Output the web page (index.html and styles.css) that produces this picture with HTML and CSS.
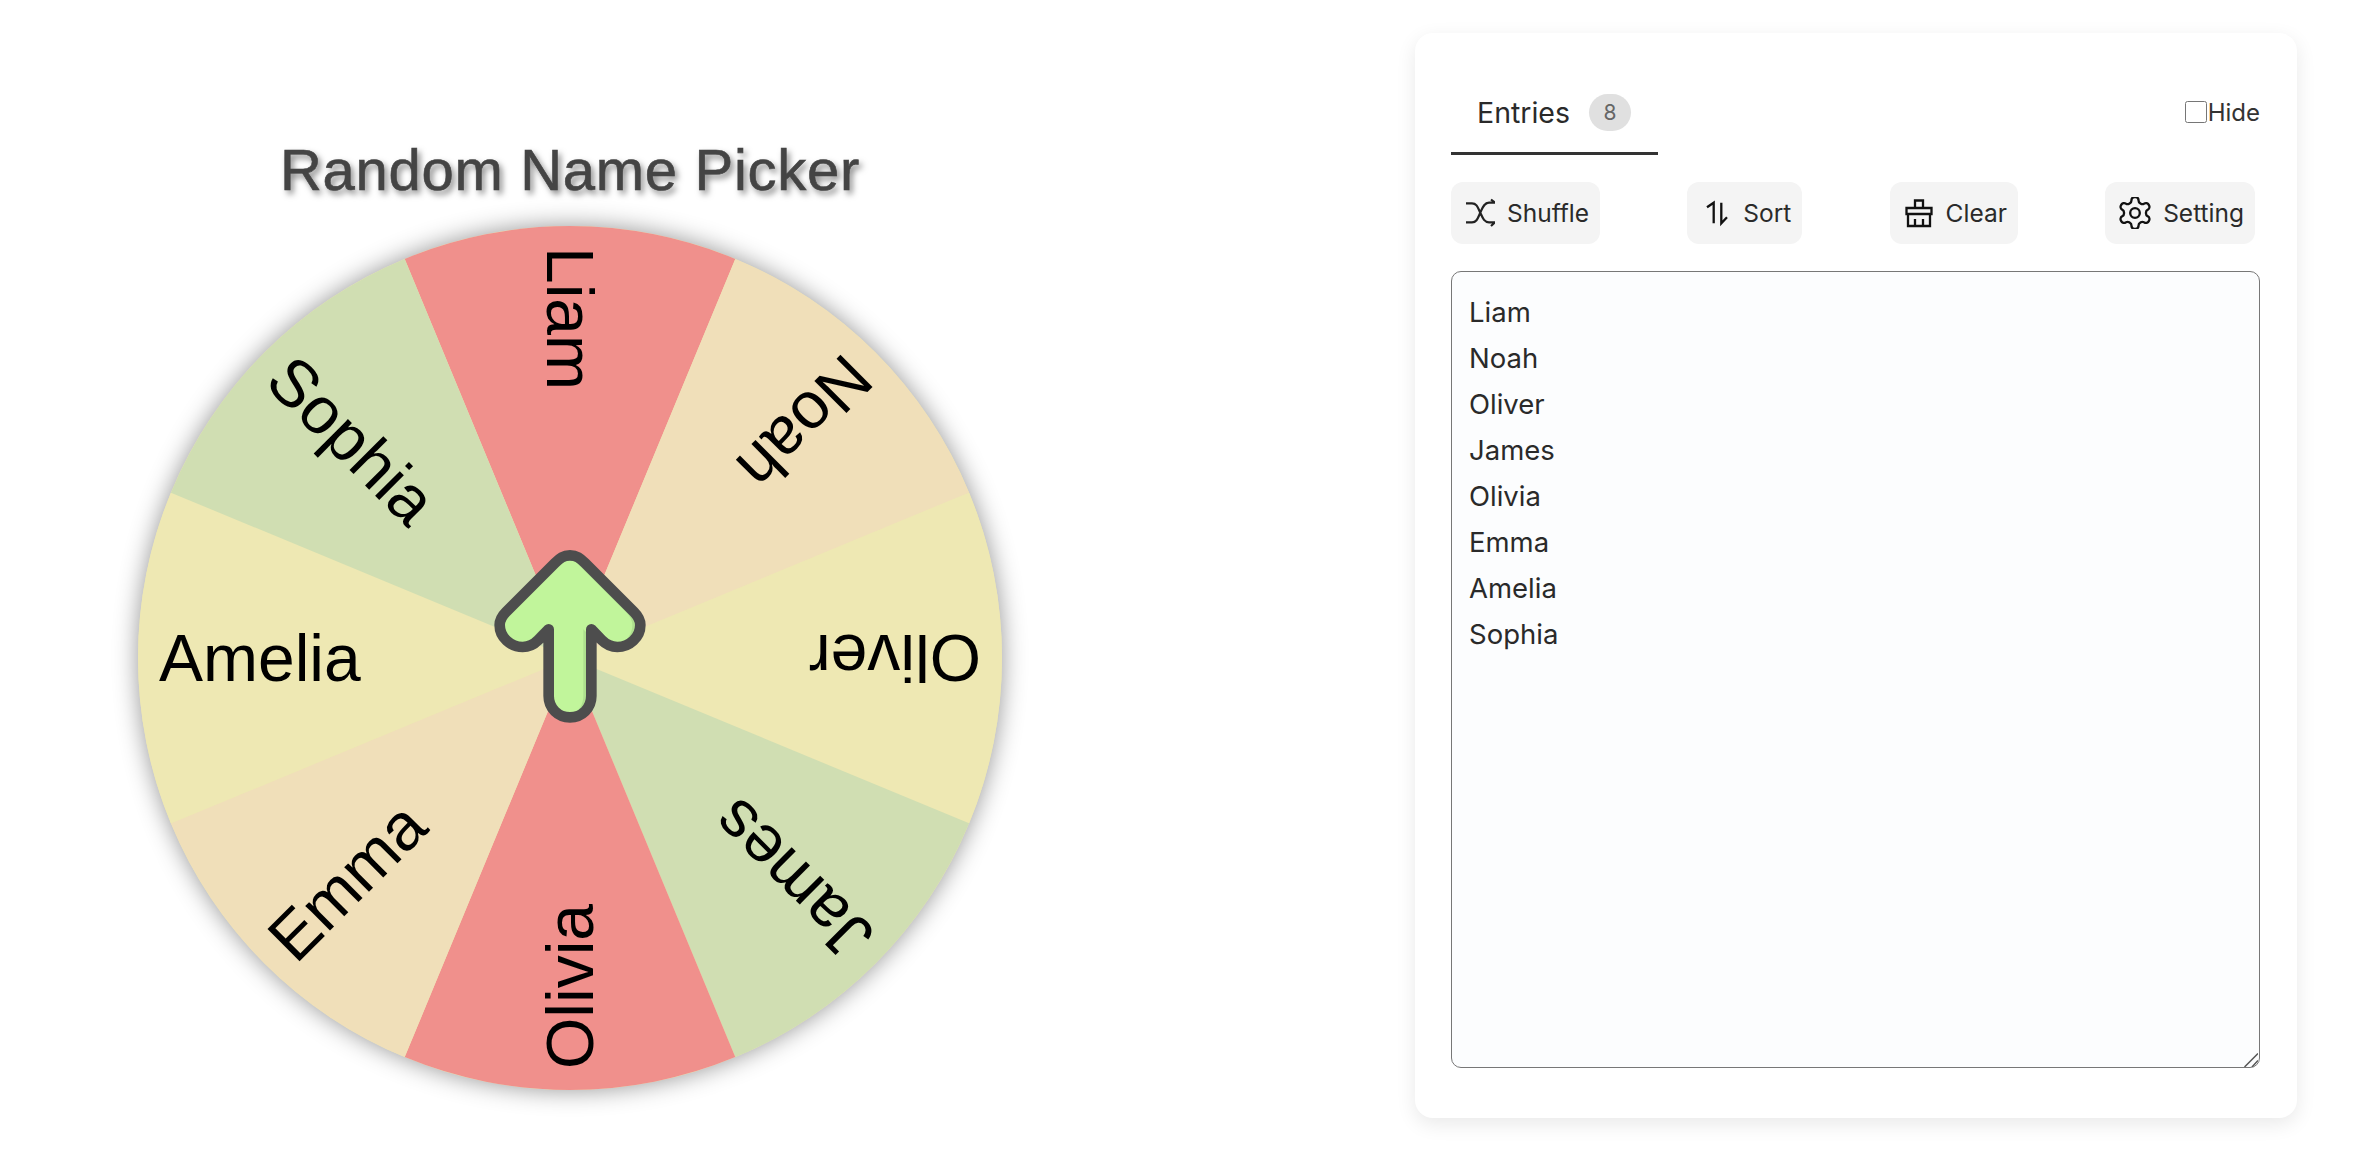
FILE: index.html
```html
<!DOCTYPE html>
<html lang="en">
<head>
  <meta charset="UTF-8">
  <title>Random Name Picker</title>
  <meta name="viewport" content="width=device-width, initial-scale=1">
  <link rel="stylesheet" href="styles.css">
</head>
<body>
  <main class="picker">
    <h1 class="title">Random Name Picker</h1>
    <svg class="wheel" viewBox="-432 -432 864 864" role="img" aria-label="Name wheel">
      <circle class="disc" r="432"/>
      <path class="red" d="M0 0L-165.3 -399.1A432 432 0 0 1 165.3 -399.1Z"/>
      <path class="tan" d="M0 0L165.3 -399.1A432 432 0 0 1 399.1 -165.3Z"/>
      <path class="yellow" d="M0 0L399.1 -165.3A432 432 0 0 1 399.1 165.3Z"/>
      <path class="green" d="M0 0L399.1 165.3A432 432 0 0 1 165.3 399.1Z"/>
      <path class="red" d="M0 0L165.3 399.1A432 432 0 0 1 -165.3 399.1Z"/>
      <path class="tan" d="M0 0L-165.3 399.1A432 432 0 0 1 -399.1 165.3Z"/>
      <path class="yellow" d="M0 0L-399.1 165.3A432 432 0 0 1 -399.1 -165.3Z"/>
      <path class="green" d="M0 0L-399.1 -165.3A432 432 0 0 1 -165.3 -399.1Z"/>

      <text class="name" x="-411" y="23" transform="rotate(90)">Liam</text>
      <text class="name" x="-411" y="23" transform="rotate(135)">Noah</text>
      <text class="name" x="-411" y="23" transform="rotate(180)">Oliver</text>
      <text class="name" x="-411" y="23" transform="rotate(225)">James</text>
      <text class="name" x="-411" y="23" transform="rotate(270)">Olivia</text>
      <text class="name" x="-411" y="23" transform="rotate(315)">Emma</text>
      <text class="name" x="-411" y="23" transform="rotate(0)">Amelia</text>
      <text class="name" x="-411" y="23" transform="rotate(45)">Sophia</text>

      <!-- spin arrow, drawn in 3x units -->
      <g transform="translate(-110 -128) scale(0.33333)">
        <defs>
          <path id="arrow" d="M330 76C350 76 360 84 375 99L522 246Q541 265 541 285C541 322 508 351 472 351C452 351 437 342 425 330L394 298V498C394 534 366 562 330 562C294 562 266 534 266 498V298L235 330C223 342 208 351 188 351C152 351 119 322 119 285Q119 265 138 246L285 99C300 84 310 76 330 76Z"/>
          <clipPath id="arrow-clip"><use href="#arrow"/></clipPath>
        </defs>
        <use class="arrow-shade" href="#arrow"/>
        <g clip-path="url(#arrow-clip)">
          <use class="arrow-fill" href="#arrow" x="-24"/>
        </g>
        <use class="arrow-line" href="#arrow"/>
      </g>
    </svg>
  </main>

  <aside class="card">
    <div class="tabs">
      <div class="tab">
        <span>Entries</span>
        <span class="badge">8</span>
      </div>
      <label class="hide"><input type="checkbox">Hide</label>
    </div>

    <div class="toolbar">
      <button type="button">
        <svg class="icon" viewBox="0 0 30 30"><path d="M1 5.3H7C12 5.3 13 10 15.3 14.7C17.5 19.5 19 24.3 24 24.3H30M1 24.3H7C12 24.3 13 19.5 15.3 14.7C17.5 10 19 4.7 24 4.7H30M26 1.5L30 4.7M26 28L30 24.3"/></svg>
        Shuffle
      </button>
      <button type="button">
        <svg class="icon dark" viewBox="0 0 30 30"><path d="M12.7 25.3V4.7L6 9.3M20.3 4.7V25.3L26 19.3"/></svg>
        Sort
      </button>
      <button type="button">
        <svg class="icon dark" viewBox="0 0 30 30"><path d="M11 10V2.5H19V10M2.5 10H27.5V16H2.5ZM4 16V28H26V16M11 21V28M19 21V28"/></svg>
        Clear
      </button>
      <button type="button">
        <svg class="icon gear" viewBox="2 2 20 20"><path d="M12.22 2h-.44a2 2 0 0 0-2 2v.18a2 2 0 0 1-1 1.73l-.43.25a2 2 0 0 1-2 0l-.15-.08a2 2 0 0 0-2.73.73l-.22.38a2 2 0 0 0 .73 2.73l.15.1a2 2 0 0 1 1 1.72v.51a2 2 0 0 1-1 1.74l-.15.09a2 2 0 0 0-.73 2.73l.22.38a2 2 0 0 0 2.73.73l.15-.08a2 2 0 0 1 2 0l.43.25a2 2 0 0 1 1 1.73V20a2 2 0 0 0 2 2h.44a2 2 0 0 0 2-2v-.18a2 2 0 0 1 1-1.73l.43-.25a2 2 0 0 1 2 0l.15.08a2 2 0 0 0 2.73-.73l.22-.39a2 2 0 0 0-.73-2.73l-.15-.08a2 2 0 0 1-1-1.74v-.5a2 2 0 0 1 1-1.74l.15-.09a2 2 0 0 0 .73-2.73l-.22-.38a2 2 0 0 0-2.73-.73l-.15.08a2 2 0 0 1-2 0l-.43-.25a2 2 0 0 1-1-1.73V4a2 2 0 0 0-2-2z"/><circle cx="12" cy="12" r="3"/></svg>
        Setting
      </button>
    </div>

    <div class="entries-box">
      <textarea class="entries" spellcheck="false">Liam
Noah
Oliver
James
Olivia
Emma
Amelia
Sophia</textarea>
      <svg class="grip" viewBox="0 0 14 14"><path d="M0.5 14L14 0.5M8 14L14 7.5"/></svg>
    </div>
  </aside>
</body>
</html>
```

FILE: styles.css
```css
* {
  box-sizing: border-box;
}

body {
  display: flex;
  justify-content: space-between;
  align-items: flex-start;
  margin: 0;
  height: 1176px;
  overflow: hidden;
  background: #fff;
  font-family: Inter, "Noto Sans", sans-serif;
  color: #2a2a2a;
}

.picker {
  display: flex;
  flex-direction: column;
  align-items: center;
  width: 1140px;
  padding-top: 138px;
}

.title {
  margin: 0 0 24px;
  font-family: "Liberation Sans", Arial, sans-serif;
  font-size: 58px;
  font-weight: 400;
  line-height: 64px;
  letter-spacing: 0.7px;
  color: #444;
  -webkit-text-stroke: 0.6px #444;
  text-shadow: 3px 4px 6px rgba(0, 0, 0, 0.5);
}

.wheel {
  display: block;
  width: 864px;
  height: 864px;
  overflow: visible;
}

.disc {
  fill: #eee8b3;
  filter: drop-shadow(0 0 12px rgba(0, 0, 0, 0.42));
}

.red { fill: #f0908c; }
.tan { fill: #f0dfb9; }
.yellow { fill: #eee8b3; }
.green { fill: #d0deb2; }

.name {
  font-family: "Liberation Sans", Arial, sans-serif;
  font-size: 66px;
  fill: #000;
}

.arrow-shade { fill: #aee08e; }
.arrow-fill { fill: #c1f59b; }

.arrow-line {
  fill: none;
  stroke: #4d4d4d;
  stroke-width: 32;
  stroke-linejoin: round;
}

.card {
  width: 882px;
  height: 1085px;
  margin: 33px 67px 0 0;
  padding: 40px 37px 0 36px;
  background: #fff;
  border-radius: 18px;
  box-shadow: 0 6px 20px rgba(0, 0, 0, 0.09);
}

.tabs {
  display: flex;
  justify-content: space-between;
  align-items: center;
}

.tab {
  display: flex;
  align-items: center;
  gap: 18px;
  height: 82px;
  padding: 0 27px 1px 26px;
  border-bottom: 3px solid #333;
  font-size: 28.5px;
}

.badge {
  display: flex;
  justify-content: center;
  align-items: center;
  width: 42px;
  height: 37px;
  margin-left: 1px;
  border-radius: 19px;
  background: #e0e0e0;
  font-size: 21px;
  color: #666;
}

.hide {
  display: flex;
  align-items: center;
  margin-bottom: 4px;
  font-size: 24px;
  color: #333;
}

.hide input {
  width: 22px;
  height: 22px;
  margin: 0 1px 0 0;
}

.toolbar {
  display: flex;
  justify-content: space-between;
  width: 804px;
  margin-top: 27px;
}

button {
  display: flex;
  align-items: center;
  gap: 12px;
  height: 62px;
  padding: 0 11px 1px 14px;
  border: none;
  border-radius: 12px;
  background: #f4f4f4;
  font-family: inherit;
  font-size: 24.5px;
  color: #2a2a2a;
}

.icon {
  width: 30px;
  height: 30px;
  fill: none;
  stroke: #222;
  stroke-width: 2.2;
}

.icon.dark {
  stroke: #111;
  stroke-width: 2.3;
}

.icon.gear {
  width: 32px;
  height: 32px;
  stroke: #111;
  stroke-width: 1.45;
}

.entries-box {
  position: relative;
  width: 809px;
  height: 797px;
  margin-top: 27px;
}

.entries {
  display: block;
  width: 100%;
  height: 100%;
  padding: 17px 17px;
  border: 1.5px solid #777;
  border-radius: 10px;
  outline: none;
  background: #fcfdfe;
  font-family: inherit;
  font-size: 27.5px;
  line-height: 46px;
  color: #2a2a2a;
  resize: none;
}

.grip {
  position: absolute;
  right: 2px;
  bottom: 1px;
  width: 14px;
  height: 14px;
  fill: none;
  stroke: #555;
  stroke-width: 1.5;
}
```
